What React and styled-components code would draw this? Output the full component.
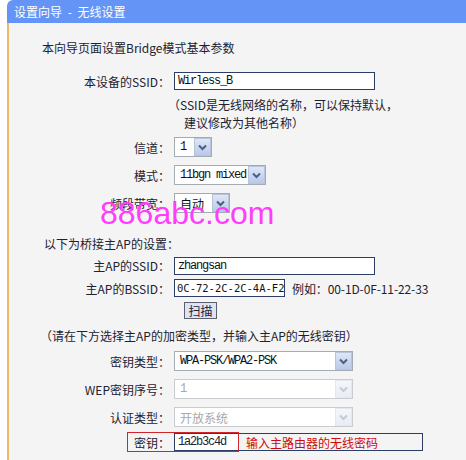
import React from 'react'
import styled, { createGlobalStyle } from 'styled-components'

const GlobalStyle = createGlobalStyle`
  html, body {
    margin: 0;
    padding: 0;
    background: #ffffff;
  }
  body {
    font-family: "Noto Sans CJK SC", "Liberation Sans", sans-serif;
    font-size: 12px;
    color: #1d2230;
  }
`

const Frame = styled.div`
  position: relative;
  width: 466px;
  height: 460px;
  padding-left: 7px;
  box-sizing: border-box;
  display: flex;
  flex-direction: column;
  overflow: hidden;
`

const Header = styled.div`
  height: 23px;
  flex: none;
  background: #6495f6;
  border-radius: 6px 0 0 0;
  color: #ffffff;
  font-size: 12px;
  line-height: 23px;
  padding-left: 7px;
  white-space: pre;
  word-spacing: 3px;
`

const Panel = styled.div`
  flex: 1;
  background: #f4f4f4;
  border-left: 2px solid #ebbb68;
  display: flex;
  flex-direction: column;
`

const Row = styled.div`
  display: flex;
  align-items: center;
  position: relative;
  height: ${p => p.h || 28}px;
  margin-top: ${p => p.mt || 0}px;
  padding-left: ${p => p.indent || 0}px;
  flex: none;
  white-space: nowrap;
`

const Label = styled.div`
  width: 161px;
  text-align: right;
  white-space: nowrap;
  flex: none;
`

const Field = styled.div`
  margin-left: 4px;
  display: flex;
  align-items: center;
  gap: 7px;
`

const Note = styled.div`
  padding-left: ${p => p.indent}px;
  white-space: nowrap;
`

const TextInput = styled.div`
  width: ${p => p.w}px;
  height: 18px;
  box-sizing: border-box;
  border: 1px solid #2c3e66;
  background: #ffffff;
  font-family: ${p => (p.sans ? '"DejaVu Sans Mono", monospace' : '"Liberation Mono", monospace')};
  font-size: ${p => (p.sans ? 10.5 : 12)}px;
  letter-spacing: ${p => (p.sans ? 0 : -1.2)}px;
  line-height: 16px;
  padding-left: ${p => (p.sans ? 2 : 3)}px;
  color: #111;
  white-space: nowrap;
  overflow: hidden;
`

const SelectBox = styled.div`
  width: ${p => p.w}px;
  height: 20px;
  box-sizing: border-box;
  border: 1px solid ${p => (p.disabled ? '#c9cdd2' : '#a4abb3')};
  background: #ffffff;
  display: flex;
  align-items: center;
`

const SelectText = styled.div`
  flex: 1;
  padding-left: 5px;
  font-family: ${p => (p.cjk ? '"Noto Sans CJK SC", sans-serif' : '"Liberation Mono", monospace')};
  font-size: 12px;
  letter-spacing: ${p => (p.cjk ? 0 : -1.2)}px;
  color: ${p => (p.disabled ? '#a8a8a8' : '#111')};
  white-space: nowrap;
  overflow: hidden;
`

const ArrowBtn = styled.div`
  width: 17px;
  height: 18px;
  box-sizing: border-box;
  border: 1px solid ${p => (p.disabled ? '#e3e8f0' : '#b7c4dc')};
  background: ${p =>
    p.disabled
      ? 'linear-gradient(#f4f6fa, #e9edf4)'
      : 'linear-gradient(#dfe7f7, #b9c9e8)'};
  display: flex;
  align-items: center;
  justify-content: center;
  flex: none;
`

const Chevron = ({ disabled }) => (
  <svg width="9" height="7" viewBox="0 0 9 7">
    <path
      d="M1 1.5 L4.5 5 L8 1.5"
      fill="none"
      stroke={disabled ? '#c3cad6' : '#4b5f86'}
      strokeWidth="2"
    />
  </svg>
)

const Select = ({ w, value, cjk, disabled }) => (
  <SelectBox w={w} disabled={disabled}>
    <SelectText cjk={cjk} disabled={disabled}>{value}</SelectText>
    <ArrowBtn disabled={disabled}>
      <Chevron disabled={disabled} />
    </ArrowBtn>
  </SelectBox>
)

const Example = styled.span`
  font-family: "Noto Sans CJK SC", sans-serif;
  letter-spacing: -0.1px;
`

const ScanButton = styled.div`
  margin-left: 14px;
  width: 33px;
  height: 17px;
  box-sizing: border-box;
  border: 1px solid #5b6070;
  background: #dde3f3;
  text-align: center;
  line-height: 15px;
  font-size: 12px;
`

const KeyField = styled.div`
  margin-left: 4px;
  width: 249px;
  height: 18px;
  box-sizing: border-box;
  border: 1px solid #2c3e66;
  display: flex;
  align-items: center;
`

const KeyValue = styled.div`
  width: 64px;
  padding-left: 3px;
  box-sizing: border-box;
  font-family: "Liberation Mono", monospace;
  font-size: 12px;
  letter-spacing: -1.2px;
  background: #ffffff;
  height: 16px;
  line-height: 16px;
`

const Hint = styled.div`
  padding-left: 7px;
  color: #cc0a0a;
  white-space: nowrap;
`

const Highlight = styled.div`
  position: absolute;
  left: 118px;
  top: 1px;
  width: 112px;
  height: 20px;
  box-sizing: border-box;
  border: 1px solid #d0262a;
  pointer-events: none;
`

const Watermark = styled.div`
  position: absolute;
  left: 100px;
  top: 197px;
  font-family: "Liberation Sans", Arial, sans-serif;
  font-size: 32px;
  line-height: 32px;
  color: #ff3dfa;
  pointer-events: none;
`

export default function App() {
  return (
    <Frame>
      <GlobalStyle />
      <Header>{'设置向导 - 无线设置'}</Header>
      <Panel>
        <Row h={24} mt={12} indent={33}>本向导页面设置Bridge模式基本参数</Row>

        <Row h={24} mt={10}>
          <Label>本设备的SSID：</Label>
          <Field><TextInput w={201}>Wirless_B</TextInput></Field>
        </Row>
        <Row h={18} mt={2}><Note indent={159}>（SSID是无线网络的名称，可以保持默认，</Note></Row>
        <Row h={18}><Note indent={175}>建议修改为其他名称）</Note></Row>

        <Row mt={2}>
          <Label>信道：</Label>
          <Field><Select w={38} value="1" /></Field>
        </Row>
        <Row>
          <Label>模式：</Label>
          <Field><Select w={92} value="11bgn mixed" /></Field>
        </Row>
        <Row>
          <Label>频段带宽：</Label>
          <Field><Select w={56} value="自动" cjk /></Field>
        </Row>

        <Row h={24} mt={14} indent={35}>以下为桥接主AP的设置：</Row>
        <Row h={21}>
          <Label>主AP的SSID：</Label>
          <Field><TextInput w={201}>zhangsan</TextInput></Field>
        </Row>
        <Row h={22} mt={1}>
          <Label>主AP的BSSID：</Label>
          <Field>
            <TextInput w={111} sans>0C-72-2C-2C-4A-F2</TextInput>
            <Example>例如：00-1D-0F-11-22-33</Example>
          </Field>
        </Row>
        <Row h={20} mt={1}>
          <Label />
          <ScanButton>扫描</ScanButton>
        </Row>
        <Row h={22} mt={4} indent={31}>（请在下方选择主AP的加密类型，并输入主AP的无线密钥）</Row>

        <Row mt={1}>
          <Label>密钥类型：</Label>
          <Field><Select w={179} value="WPA-PSK/WPA2-PSK" /></Field>
        </Row>
        <Row>
          <Label>WEP密钥序号：</Label>
          <Field><Select w={179} value="1" disabled /></Field>
        </Row>
        <Row>
          <Label>认证类型：</Label>
          <Field><Select w={179} value="开放系统" cjk disabled /></Field>
        </Row>
        <Row h={22}>
          <Label>密钥：</Label>
          <KeyField>
            <KeyValue>1a2b3c4d</KeyValue>
            <Hint>输入主路由器的无线密码</Hint>
          </KeyField>
          <Highlight />
        </Row>
      </Panel>
      <Watermark>886abc.com</Watermark>
    </Frame>
  )
}
